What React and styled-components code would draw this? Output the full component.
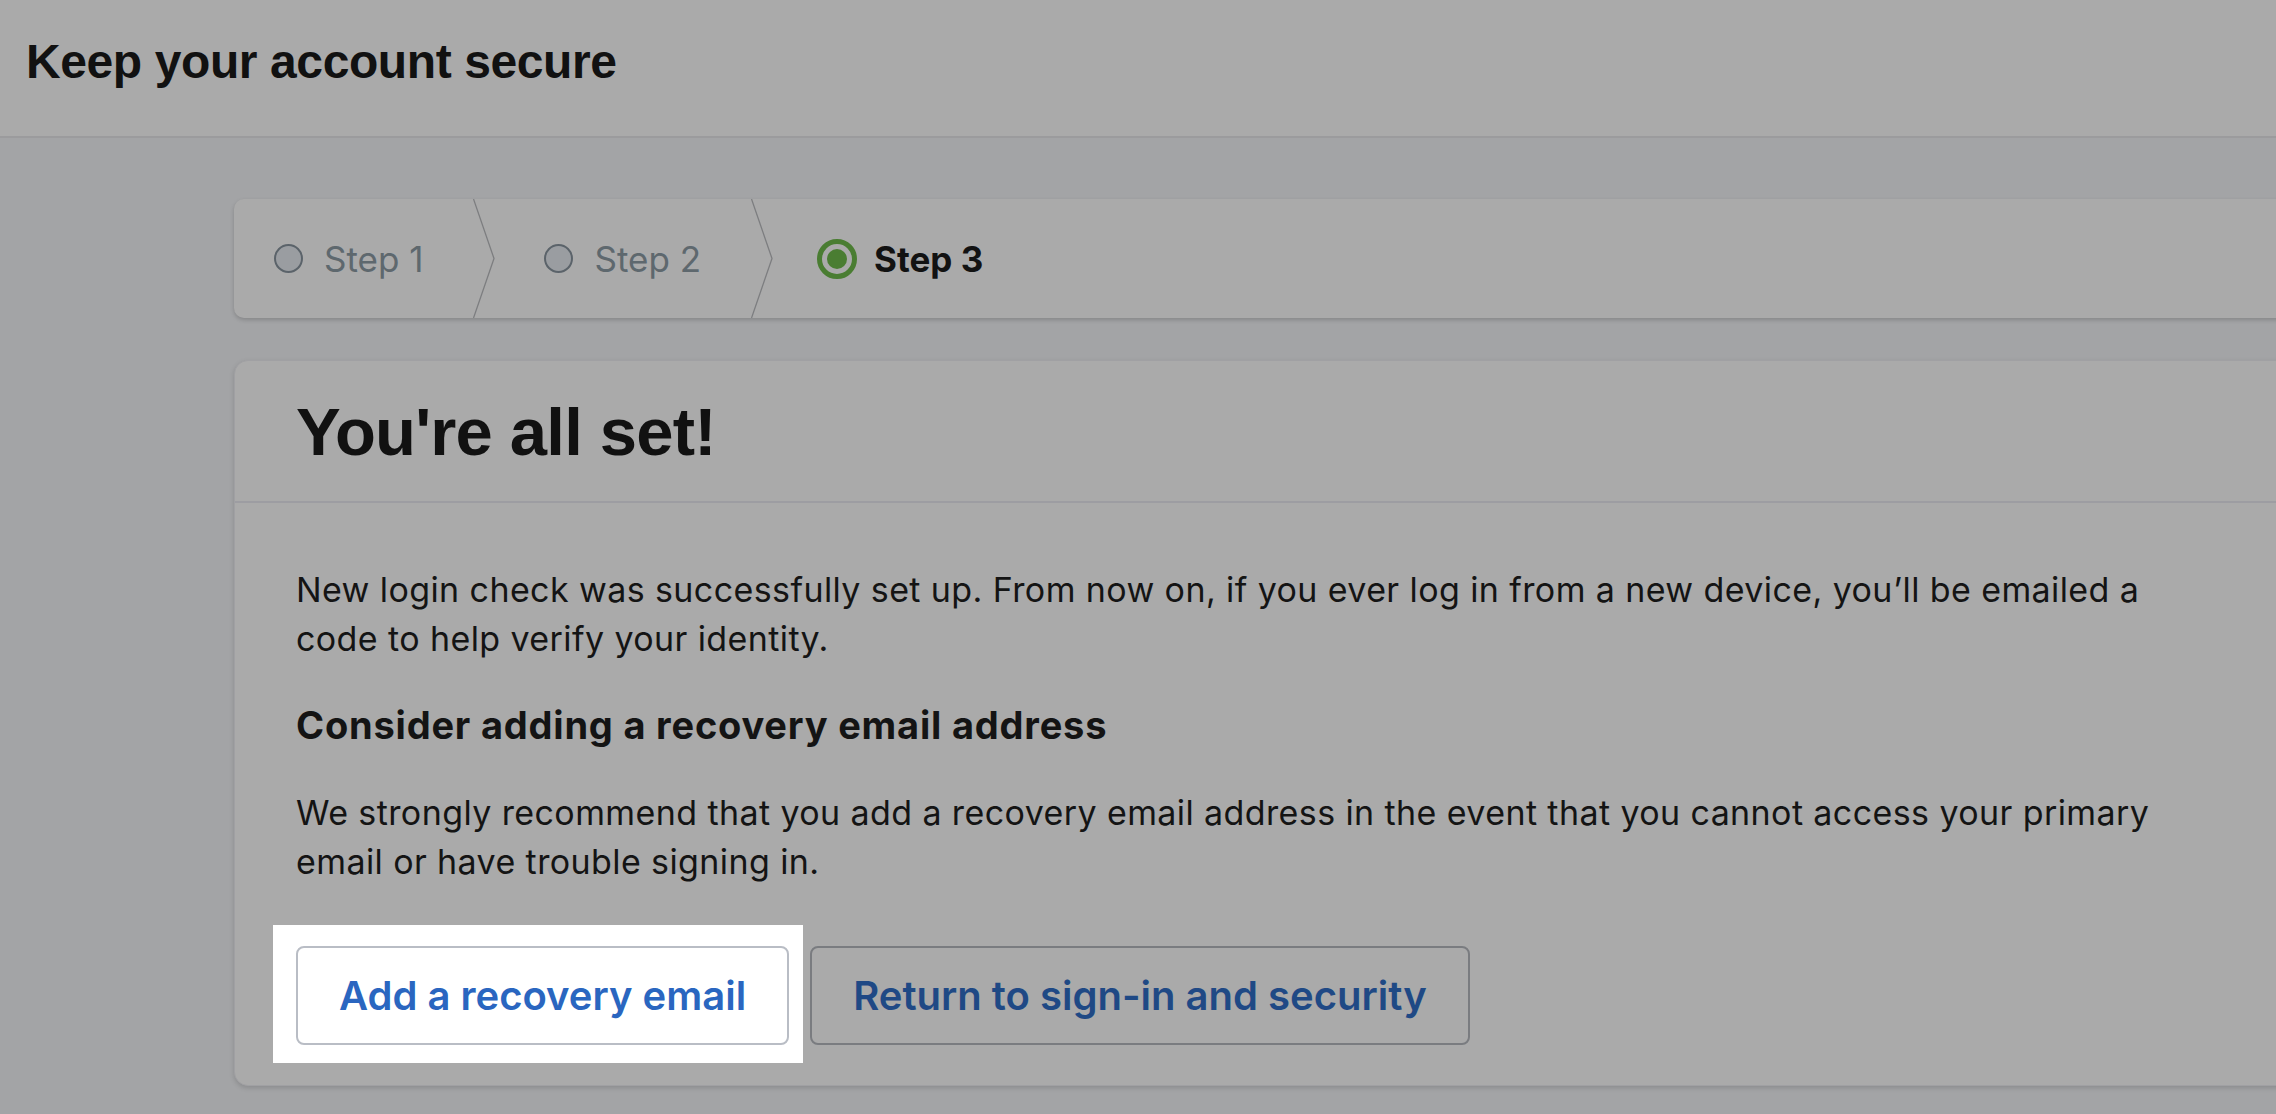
import React from "react";
import styled, { createGlobalStyle } from "styled-components";

const GlobalStyle = createGlobalStyle`
  html, body {
    margin: 0;
    padding: 0;
    background: #a3a4a6;
    overflow: hidden;
  }
  * {
    box-sizing: border-box;
  }
`;

const bodyFont = `Inter, "Noto Sans", sans-serif`;
const headFont = `"Liberation Sans", Arial, sans-serif`;

function App() {
  return (
    <StyledPage>
      <GlobalStyle />
      <TopBar>
        <PageTitle>Keep your account secure</PageTitle>
      </TopBar>

      <Main>
        <Stepper>
          <Step first>
            <Dot />
            <StepLabel>Step 1</StepLabel>
          </Step>
          <Chevron />
          <Step>
            <Dot />
            <StepLabel>Step 2</StepLabel>
          </Step>
          <Chevron />
          <Step current>
            <CurrentDot />
            <StepLabel current>Step 3</StepLabel>
          </Step>
        </Stepper>

        <Card>
          <CardHeader>
            <CardTitle>You're all set!</CardTitle>
          </CardHeader>
          <CardBody>
            <Text>
              New login check was successfully set up. From now on, if you ever
              log in from a new device, you’ll be emailed a code to help verify
              your identity.
            </Text>
            <SubTitle>Consider adding a recovery email address</SubTitle>
            <Text>
              We strongly recommend that you add a recovery email address in the
              event that you cannot access your primary email or have trouble
              signing in.
            </Text>
            <Actions>
              <Spotlight>
                <Button primary>Add a recovery email</Button>
              </Spotlight>
              <Button>Return to sign-in and security</Button>
            </Actions>
          </CardBody>
        </Card>
      </Main>
    </StyledPage>
  );
}

function Chevron() {
  return (
    <ChevronSvg viewBox="0 0 22 119" preserveAspectRatio="none">
      <polyline
        points="0.5,0 21,59.5 0.5,119"
        fill="none"
        stroke="#7d7e80"
        strokeWidth="1.3"
      />
    </ChevronSvg>
  );
}

export default App;

const StyledPage = styled.div`
  width: 100vw;
  min-height: 100vh;
  overflow: hidden;
  background: #a3a4a6;
`;

const TopBar = styled.header`
  height: 138px;
  background: #aaaaaa;
  border-bottom: 2px solid #9b9b9d;
  display: flex;
  align-items: center;
  padding-left: 26px;
  padding-bottom: 14px;
`;

const PageTitle = styled.h1`
  margin: 0;
  font-family: ${headFont};
  font-size: 48px;
  font-weight: 700;
  letter-spacing: -0.4px;
  color: #111;
`;

const Main = styled.main`
  padding: 61px 0 0 234px;
  margin-right: -40px;
  display: flex;
  flex-direction: column;
  gap: 42px;
`;

const Stepper = styled.nav`
  height: 119px;
  background: #aaaaaa;
  border-radius: 10px 0 0 10px;
  box-shadow: 0 2px 4px rgba(0, 0, 0, 0.18);
  display: flex;
  align-items: stretch;
`;

const Step = styled.div`
  display: flex;
  align-items: center;
  gap: ${(p) => (p.current ? "17px" : "21px")};
  padding: 0 50px 0 ${(p) => (p.first ? "40px" : p.current ? "44px" : "49px")};
`;

const Dot = styled.span`
  width: 29px;
  height: 29px;
  border-radius: 50%;
  background: #9a9da1;
  border: 2px solid #5b636a;
`;

const CurrentDot = styled.span`
  width: 40px;
  height: 40px;
  border-radius: 50%;
  border: 5px solid #4a7d32;
  display: flex;
  align-items: center;
  justify-content: center;

  &::after {
    content: "";
    width: 20px;
    height: 20px;
    border-radius: 50%;
    background: #4a7d32;
  }
`;

const StepLabel = styled.span`
  font-family: ${bodyFont};
  font-size: 35px;
  font-weight: ${(p) => (p.current ? 700 : 400)};
  color: ${(p) => (p.current ? "#121212" : "#5e686e")};
`;

const ChevronSvg = styled.svg`
  width: 22px;
  height: 119px;
  flex-shrink: 0;
`;

const Card = styled.section`
  background: #aaaaaa;
  border-radius: 14px 0 0 14px;
  border: 1px solid #a0a0a3;
  box-shadow: 0 2px 5px rgba(0, 0, 0, 0.15);
`;

const CardHeader = styled.div`
  height: 142px;
  border-bottom: 2px solid #9d9da2;
  display: flex;
  align-items: center;
  padding-left: 61px;
`;

const CardTitle = styled.h2`
  margin: 0;
  font-family: ${headFont};
  font-size: 67px;
  font-weight: 700;
  letter-spacing: -0.8px;
  color: #111;
`;

const CardBody = styled.div`
  padding: 62px 0 40px 61px;
  max-width: 1960px;
`;

const Text = styled.p`
  margin: 0;
  font-family: ${bodyFont};
  font-size: 34px;
  line-height: 49px;
  letter-spacing: 0.4px;
  color: #141414;
`;

const SubTitle = styled.h3`
  margin: 40px 0 41px;
  font-family: ${bodyFont};
  font-size: 38px;
  line-height: 44px;
  font-weight: 700;
  letter-spacing: 0.8px;
  color: #141414;
`;

const Actions = styled.div`
  display: flex;
  gap: 21px;
  margin-top: 60px;
`;

const Spotlight = styled.div`
  position: relative;

  &::before {
    content: "";
    position: absolute;
    top: -21px;
    right: -14px;
    bottom: -18px;
    left: -23px;
    background: #ffffff;
  }
`;

const Button = styled.button`
  position: relative;
  height: 99px;
  padding: 0 41px;
  border-radius: 8px;
  border: 2px solid ${(p) => (p.primary ? "#b9bdc5" : "#7a7c80")};
  background: ${(p) => (p.primary ? "#ffffff" : "transparent")};
  color: ${(p) => (p.primary ? "#2a66c0" : "#1f4985")};
  font-family: ${bodyFont};
  font-size: 40px;
  font-weight: 600;
  cursor: pointer;
`;
